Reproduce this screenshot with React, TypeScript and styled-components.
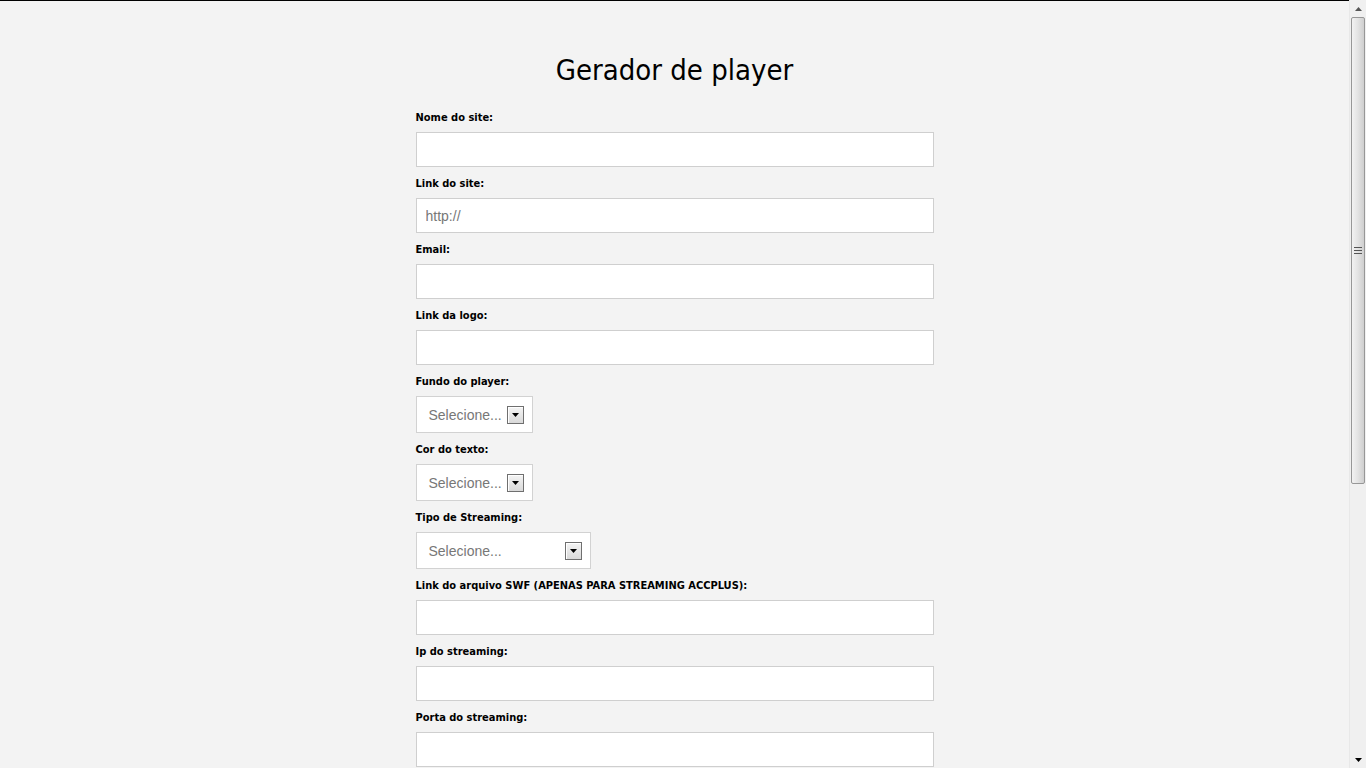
import React from "react";
import styled, { createGlobalStyle } from "styled-components";

const GlobalStyle = createGlobalStyle`
  html, body {
    margin: 0;
    padding: 0;
    background: #f3f3f3;
    overflow: hidden;
  }
  * { box-sizing: border-box; }
`;

const Page = styled.div`
  display: flex;
  height: 768px;
  width: 1366px;
  overflow: hidden;
`;

const Main = styled.main`
  flex: 1;
  border-top: 1px solid #000;
  background: #f3f3f3;
  overflow: hidden;
`;

const Form = styled.form`
  width: 518px;
  margin: 0 auto;
  padding-top: 51px;
  display: flex;
  flex-direction: column;
`;

const Title = styled.h1`
  margin: 0 0 23px;
  text-align: center;
  font-family: "DejaVu Sans Condensed", "DejaVu Sans", sans-serif;
  font-weight: normal;
  font-size: 29px;
  line-height: 36px;
  color: #000;
`;

const Field = styled.div`
  display: flex;
  flex-direction: column;
  align-items: flex-start;
  margin-bottom: 10px;
`;

const Label = styled.label`
  font-family: "DejaVu Sans Condensed", "DejaVu Sans", sans-serif;
  font-weight: bold;
  font-size: 11px;
  line-height: 13px;
  color: #000;
  margin-bottom: 8px;
`;

const Input = styled.input`
  width: 518px;
  height: 35px;
  border: 1px solid #cfcfcf;
  background: #fff;
  padding: 0 9px;
  font-family: "Liberation Sans", Arial, sans-serif;
  font-size: 14px;
  color: #333;
  outline: none;
  &::placeholder {
    color: #777;
  }
`;

const FakeSelect = styled.div<{ $w: number }>`
  width: ${(p) => p.$w}px;
  height: 37px;
  border: 1px solid #d2d2d2;
  background: #fff;
  display: flex;
  align-items: center;
  justify-content: space-between;
  padding: 0 8px 0 12px;
  font-family: "Liberation Sans", Arial, sans-serif;
  font-size: 14px;
  color: #777;
`;

const ArrowBox = styled.span`
  width: 17px;
  height: 18px;
  border: 1px solid #6f6f6f;
  background: linear-gradient(#f4f4f4, #d9d9d9);
  display: flex;
  align-items: center;
  justify-content: center;
  box-shadow: inset 1px 1px 0 #fff;
`;

const Scrollbar = styled.div`
  width: 17px;
  display: flex;
  flex-direction: column;
  background: #f0f0f0;
  border-left: 1px solid #e8e8e8;
`;

const ScrollButton = styled.div`
  height: 17px;
  display: flex;
  align-items: center;
  justify-content: center;
`;

const Track = styled.div`
  flex: 1;
  display: flex;
  flex-direction: column;
  padding: 0 1px;
`;

const Thumb = styled.div`
  height: 467px;
  border: 1px solid #979797;
  border-radius: 2px;
  background: linear-gradient(90deg, #f2f2f2 0%, #e4e4e4 45%, #cfcfcf 100%);
  display: flex;
  align-items: center;
  justify-content: center;
`;

const Arrow = ({ up }: { up?: boolean }) => (
  <svg width="7" height="4" viewBox="0 0 7 4">
    <path d={up ? "M0 4 L3.5 0 L7 4 Z" : "M0 0 L7 0 L3.5 4 Z"} fill={up ? "#555" : "#000"} />
  </svg>
);

const Grip = () => (
  <svg width="8" height="7" viewBox="0 0 8 7">
    <path d="M0 0.5H8M0 3.5H8M0 6.5H8" stroke="#555" strokeWidth="1" />
  </svg>
);

type FieldDef =
  | { kind: "input"; label: string; placeholder?: string }
  | { kind: "select"; label: string; width: number };

const fields: FieldDef[] = [
  { kind: "input", label: "Nome do site:" },
  { kind: "input", label: "Link do site:", placeholder: "http://" },
  { kind: "input", label: "Email:" },
  { kind: "input", label: "Link da logo:" },
  { kind: "select", label: "Fundo do player:", width: 117 },
  { kind: "select", label: "Cor do texto:", width: 117 },
  { kind: "select", label: "Tipo de Streaming:", width: 175 },
  { kind: "input", label: "Link do arquivo SWF (APENAS PARA STREAMING ACCPLUS):" },
  { kind: "input", label: "Ip do streaming:" },
  { kind: "input", label: "Porta do streaming:" },
];

export default function App() {
  return (
    <>
      <GlobalStyle />
      <Page>
        <Main>
          <Form onSubmit={(e) => e.preventDefault()}>
            <Title>Gerador de player</Title>
            {fields.map((f) =>
              f.kind === "input" ? (
                <Field key={f.label}>
                  <Label>{f.label}</Label>
                  <Input type="text" placeholder={f.placeholder} />
                </Field>
              ) : (
                <Field key={f.label}>
                  <Label>{f.label}</Label>
                  <FakeSelect $w={f.width}>
                    <span>Selecione...</span>
                    <ArrowBox>
                      <Arrow />
                    </ArrowBox>
                  </FakeSelect>
                </Field>
              )
            )}
          </Form>
        </Main>
        <Scrollbar>
          <ScrollButton>
            <Arrow up />
          </ScrollButton>
          <Track>
            <Thumb>
              <Grip />
            </Thumb>
          </Track>
          <ScrollButton>
            <Arrow />
          </ScrollButton>
        </Scrollbar>
      </Page>
    </>
  );
}
